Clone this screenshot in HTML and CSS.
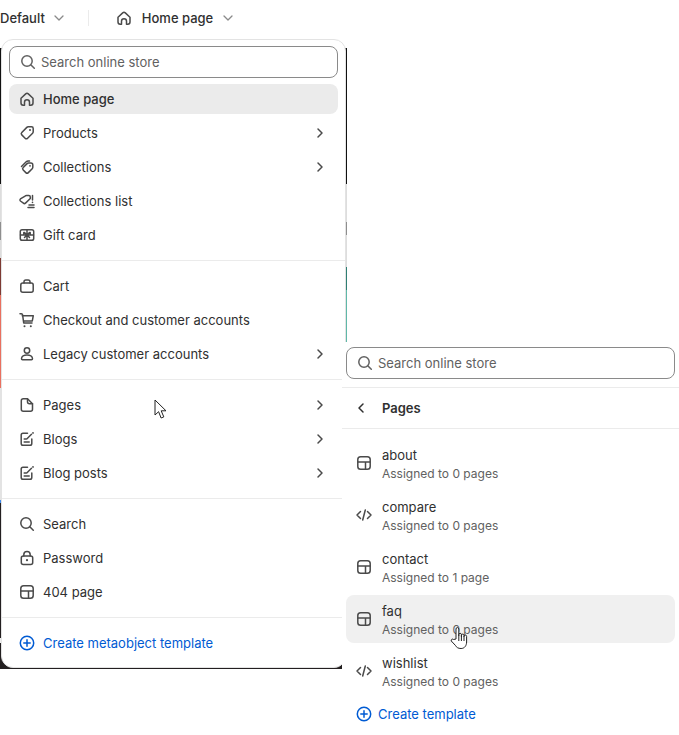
FILE: index.html
```html
<!DOCTYPE html>
<html>
<head>
	<meta charset="utf-8">
	<title>Home page</title>
	<link rel="stylesheet" href="styles.css">
</head>
<body>
	<!--icons-->
	<svg class="sprite" width="0" height="0">
		<symbol id="i-home" viewBox="0 0 20 20"><path d="M4 9.200 8.700 4.900a2 2 0 0 1 2.600 0L16 9.200v4.800a2.200 2.200 0 0 1-2.200 2.200h-1.300v-3a2.500 2.500 0 0 0-5 0v3H6.200A2.200 2.200 0 0 1 4 14z"/></symbol>
		<symbol id="i-tag" viewBox="0 0 20 20"><path d="M11.200 3.800h3.300a1.700 1.700 0 0 1 1.700 1.700v3.300a2 2 0 0 1-.6 1.400l-5 5a1.800 1.800 0 0 1-2.500 0l-3.300-3.300a1.800 1.800 0 0 1 0-2.500l5-5a2 2 0 0 1 1.400-.6z"/><circle class="fill" cx="13" cy="7" r="1"/></symbol>
		<symbol id="i-tags" viewBox="0 0 20 20"><path d="M11.500 6h2.400a1.900 1.900 0 0 1 1.900 1.900v2.400a2 2 0 0 1-.6 1.400l-3.900 3.900a1.800 1.800 0 0 1-2.500 0l-2.600-2.600a1.800 1.800 0 0 1 0-2.500l3.900-3.900a2 2 0 0 1 1.400-.6z"/><path d="M4.500 9.500l4.700-4.700a3 3 0 0 1 2-.9h1.300"/><circle class="fill" cx="13" cy="8.800" r=".9"/></symbol>
		<symbol id="i-list" viewBox="0 0 20 20"><path d="M9.500 4.500h2.300a1.500 1.500 0 0 1 1.500 1.500v1.500l-4.800 4.600a1.500 1.500 0 0 1-2.100 0L3.400 10a1.500 1.500 0 0 1 0-2.100l4.700-2.800a2 2 0 0 1 1.400-.6z"/><path d="M15.500 4.500v4.500M12 14h5M11 16.500h6"/><circle class="fill" cx="15.500" cy="11.400" r=".8"/></symbol>
		<symbol id="i-gift" viewBox="0 0 20 20"><rect x="3.300" y="4.800" width="13.400" height="10.400" rx="1.800"/><path d="M10 5v10M3.500 10h13M10 10 7.500 7.500H6.800v2.200zM10 10l2.500-2.500h.7v2.200zM10 10l-2.500 2.500M10 10l2.500 2.500"/></symbol>
		<symbol id="i-bag" viewBox="0 0 20 20"><rect x="3.800" y="7" width="12.400" height="9.200" rx="2"/><path d="M7 7V5.800A1.800 1.800 0 0 1 8.800 4h2.400A1.800 1.800 0 0 1 13 5.800V7"/></symbol>
		<symbol id="i-cart" viewBox="0 0 20 20"><path d="M3 3.800h1.300a1.300 1.300 0 0 1 1.300 1.100L6.700 13h8.300M5.200 5.700H16.300l-1 5.200H6.400"/><circle class="fill" cx="7.500" cy="16.300" r="1"/><circle class="fill" cx="13.800" cy="16.300" r="1"/></symbol>
		<symbol id="i-person" viewBox="0 0 20 20"><circle cx="10" cy="6.500" r="2.700"/><path d="M4.500 14.800c0-2.400 2.500-3.900 5.500-3.900s5.500 1.500 5.500 3.900a1 1 0 0 1-1 1h-9a1 1 0 0 1-1-1z"/></symbol>
		<symbol id="i-page" viewBox="0 0 20 20"><path d="M6.300 3.800h4.200l5 5v5.400a2 2 0 0 1-2 2H6.300a2 2 0 0 1-2-2V5.800a2 2 0 0 1 2-2z"/><path d="M10.500 4v2.800a2 2 0 0 0 2 2h3"/></symbol>
		<symbol id="i-blog" viewBox="0 0 20 20"><path d="M10.500 4.300H6a1.800 1.800 0 0 0-1.800 1.800v8.300A1.800 1.800 0 0 0 6 16.200h7a1.800 1.800 0 0 0 1.800-1.800V10M7.200 13h5M7.200 10h2.300M10 9.800l4.500-4.500"/><circle class="fill" cx="16" cy="3.900" r=".9"/></symbol>
		<symbol id="i-search" viewBox="0 0 20 20"><circle cx="9" cy="9" r="5.200"/><path d="m13 13 3.300 3.300"/></symbol>
		<symbol id="i-lock" viewBox="0 0 20 20"><rect x="4.300" y="8" width="11.400" height="8.500" rx="2"/><path d="M6.800 8V6.800a3.200 3.200 0 0 1 6.400 0V8"/><circle class="fill" cx="10" cy="12.200" r="1.100"/></symbol>
		<symbol id="i-layout" viewBox="0 0 20 20"><rect x="3.800" y="3.800" width="12.400" height="12.400" rx="2.800"/><path d="M4 9h12M11.500 9v7"/></symbol>
		<symbol id="i-code" viewBox="0 0 20 20"><path d="M6.500 6.500 3 10l3.500 3.500M13.500 6.500 17 10l-3.500 3.500M11.300 5 8.700 15"/></symbol>
		<symbol id="i-plus" viewBox="0 0 20 20"><circle cx="10" cy="10" r="6.700"/><path d="M10 6.800v6.400M6.800 10h6.400"/></symbol>
		<symbol id="i-down" viewBox="0 0 20 20"><path d="m6 8 4 4 4-4"/></symbol>
		<symbol id="i-right" viewBox="0 0 20 20"><path d="m8 6 4 4-4 4"/></symbol>
		<symbol id="i-left" viewBox="0 0 20 20"><path d="m12 6-4 4 4 4"/></symbol>
	</svg>

	<!--top bar-->
	<div class="topbar">
		<div class="picker">
			<span>Default</span>
			<svg class="icon caret"><use href="#i-down"/></svg>
		</div>
		<div class="bar-line"></div>
		<div class="picker picker-page">
			<svg class="icon"><use href="#i-home"/></svg>
			<span>Home page</span>
			<svg class="icon caret"><use href="#i-down"/></svg>
		</div>
	</div>

	<!--page behind the menus-->
	<div class="behind">
		<div class="strip strip-left"></div>
		<div class="strip strip-right"></div>
	</div>

	<!--first menu-->
	<div class="menu">
		<div class="search-wrap">
			<div class="search">
				<svg class="icon"><use href="#i-search"/></svg>
				<span>Search online store</span>
			</div>
		</div>
		<ul class="group group-first">
			<li class="row row-on"><svg class="icon"><use href="#i-home"/></svg><span class="label">Home page</span></li>
			<li class="row"><svg class="icon"><use href="#i-tag"/></svg><span class="label">Products</span><svg class="icon arrow"><use href="#i-right"/></svg></li>
			<li class="row"><svg class="icon"><use href="#i-tags"/></svg><span class="label">Collections</span><svg class="icon arrow"><use href="#i-right"/></svg></li>
			<li class="row"><svg class="icon"><use href="#i-list"/></svg><span class="label">Collections list</span></li>
			<li class="row"><svg class="icon"><use href="#i-gift"/></svg><span class="label">Gift card</span></li>
		</ul>
		<ul class="group">
			<li class="row"><svg class="icon"><use href="#i-bag"/></svg><span class="label">Cart</span></li>
			<li class="row"><svg class="icon"><use href="#i-cart"/></svg><span class="label">Checkout and customer accounts</span></li>
			<li class="row"><svg class="icon"><use href="#i-person"/></svg><span class="label">Legacy customer accounts</span><svg class="icon arrow"><use href="#i-right"/></svg></li>
		</ul>
		<ul class="group">
			<li class="row"><svg class="icon"><use href="#i-page"/></svg><span class="label">Pages</span><svg class="icon arrow"><use href="#i-right"/></svg></li>
			<li class="row"><svg class="icon"><use href="#i-blog"/></svg><span class="label">Blogs</span><svg class="icon arrow"><use href="#i-right"/></svg></li>
			<li class="row"><svg class="icon"><use href="#i-blog"/></svg><span class="label">Blog posts</span><svg class="icon arrow"><use href="#i-right"/></svg></li>
		</ul>
		<ul class="group">
			<li class="row"><svg class="icon"><use href="#i-search"/></svg><span class="label">Search</span></li>
			<li class="row"><svg class="icon"><use href="#i-lock"/></svg><span class="label">Password</span></li>
			<li class="row"><svg class="icon"><use href="#i-layout"/></svg><span class="label">404 page</span></li>
		</ul>
		<div class="group group-create">
			<div class="row row-create"><svg class="icon"><use href="#i-plus"/></svg><span class="label">Create metaobject template</span></div>
		</div>
	</div>

	<!--second menu-->
	<div class="submenu">
		<div class="search-wrap sub-search">
			<div class="search">
				<svg class="icon"><use href="#i-search"/></svg>
				<span>Search online store</span>
			</div>
		</div>
		<div class="sub-head">
			<svg class="icon"><use href="#i-left"/></svg>
			<span>Pages</span>
		</div>
		<ul class="sub-list">
			<li class="sub-row"><svg class="icon"><use href="#i-layout"/></svg><div class="sub-text"><div class="sub-name">about</div><div class="sub-note">Assigned to 0 pages</div></div></li>
			<li class="sub-row"><svg class="icon"><use href="#i-code"/></svg><div class="sub-text"><div class="sub-name">compare</div><div class="sub-note">Assigned to 0 pages</div></div></li>
			<li class="sub-row"><svg class="icon"><use href="#i-layout"/></svg><div class="sub-text"><div class="sub-name">contact</div><div class="sub-note">Assigned to 1 page</div></div></li>
			<li class="sub-row sub-row-on"><svg class="icon"><use href="#i-layout"/></svg><div class="sub-text"><div class="sub-name">faq</div><div class="sub-note">Assigned to 0 pages</div></div></li>
			<li class="sub-row"><svg class="icon"><use href="#i-code"/></svg><div class="sub-text"><div class="sub-name">wishlist</div><div class="sub-note">Assigned to 0 pages</div></div></li>
		</ul>
		<div class="sub-create">
			<svg class="icon"><use href="#i-plus"/></svg>
			<span>Create template</span>
		</div>
	</div>

	<!--mouse pointers-->
	<svg class="pointer pointer-arrow" width="14" height="21" viewBox="0 0 14 21"><path d="M1 1v15l3.600-3.300 2.500 6.300 2.700-1.100-2.600-6.100h4.800z"/></svg>
	<svg class="pointer pointer-hand" width="18" height="24" viewBox="0 0 18 24"><path d="M6 13V3a1.400 1.400 0 0 1 2.800 0v7-1.400a1.300 1.300 0 0 1 2.600 0V11 9.400a1.300 1.300 0 0 1 2.600 0V11v-.6a1.300 1.300 0 0 1 2.600 0V16c0 3.500-2 6.500-5.500 6.500-3 0-4.500-1-5.800-3.200L1.300 15a1.400 1.400 0 0 1 2.300-1.500z"/><path d="M8.800 10v5M11.400 11v4M14 11v4"/></svg>
</body>
</html>
```

FILE: styles.css
```css
*{
    margin: 0;
    padding: 0;
    box-sizing: border-box;
    list-style: none;
}

html, body{
    width: 100%;
    height: 100%;
    overflow: hidden;
    background-color: #fff;
}

body{
    position: relative;
    font-family: Inter, "Liberation Sans", sans-serif;
    font-size: 13px;
    color: #303030;
}

.sprite{
    position: absolute;
}

.icon{
    width: 20px;
    height: 20px;
    flex: none;
    fill: none;
    stroke: #4a4a4a;
    stroke-width: 1.5;
    stroke-linecap: round;
    stroke-linejoin: round;
}

symbol .fill{
    fill: #4a4a4a;
    stroke: none;
}

/*top bar*/
.topbar{
    display: flex;
    align-items: center;
    height: 35px;
    font-weight: 500;
}

.picker{
    display: flex;
    align-items: center;
    gap: 4px;
}

.picker .caret{
    stroke: #8a8a8a;
    stroke-width: 1.3;
}

.picker-page{
    gap: 8px;
}

.picker-page .caret{
    margin-left: -3px;
}

.bar-line{
    width: 1px;
    height: 16px;
    margin: 0 25px 0 19px;
    background-color: #ebebeb;
}

/*what shows around the menus*/
.behind{
    position: absolute;
    left: 0;
    top: 48px;
    width: 347px;
    height: 621px;
    background-color: #231f20;
}

.strip{
    position: absolute;
    top: 0;
    width: 2px;
    height: 621px;
}

.strip-left{
    left: 0;
    background: linear-gradient(#111 0 136px, #ddd 136px 174px, #8e8e8e 174px 192px, #ddd 192px 210px, #7d3a33 210px 247px, #e9705f 247px 340px, #e3e3e3 340px 452px, #3f8cf0 452px 455px, #231f20 455px 590px, #eee 590px 595px, #231f20 595px);
}

.strip-right{
    right: 0;
    background: linear-gradient(#111 0 136px, #ddd 136px 174px, #8e8e8e 174px 187px, #ddd 187px 219px, #2f7f73 219px 242px, #5fb8a8 242px 294px, #fff 294px);
}

/*first menu*/
.menu{
    position: absolute;
    left: 1px;
    top: 39px;
    width: 345px;
    height: 629px;
    padding-top: 6px;
    background-color: #fff;
    border: 1px solid #e3e3e3;
    border-radius: 12px;
}

.search-wrap{
    padding: 0 7px;
}

.search{
    display: flex;
    align-items: center;
    gap: 3px;
    height: 32px;
    padding: 0 8px;
    color: #616161;
    border: 1px solid #8a8a8a;
    border-radius: 8px;
}

.search .icon{
    stroke: #616161;
}

.group{
    display: flex;
    flex-direction: column;
    gap: 4px;
    padding: 10px 7px;
    border-top: 1px solid #ebebeb;
}

.group-first{
    padding-top: 6px;
    border-top: 0;
}

.row{
    display: flex;
    align-items: center;
    gap: 6px;
    height: 30px;
    padding: 0 8px;
    border-radius: 8px;
}

.row .label{
    flex: 1;
}

.row-on{
    font-weight: 500;
    background-color: #ebebeb;
}

.row-create{
    color: #005bd3;
}

.row-create .icon, .sub-create .icon{
    stroke: #005bd3;
}

/*second menu*/
.submenu{
    position: absolute;
    left: 342px;
    top: 342px;
    width: 337px;
    height: 393px;
    padding-top: 5px;
    background-color: #fff;
}

.sub-search{
    padding: 0 4px;
}

.sub-head{
    display: flex;
    align-items: center;
    gap: 11px;
    height: 42px;
    margin-top: 8px;
    padding: 0 9px;
    font-weight: 600;
    border-top: 1px solid #ebebeb;
    border-bottom: 1px solid #ebebeb;
}

.sub-head .icon{
    stroke: #303030;
}

.sub-list{
    display: flex;
    flex-direction: column;
    gap: 4px;
    padding: 10px 4px 0;
}

.sub-row{
    display: flex;
    align-items: center;
    gap: 8px;
    height: 48px;
    padding: 0 8px;
    border-radius: 8px;
}

.sub-row-on{
    background-color: #f0f0f0;
}

.sub-text{
    padding-top: 2px;
}

.sub-name{
    line-height: 18px;
}

.sub-note{
    margin-top: 1px;
    font-size: 12px;
    line-height: 18px;
    color: #616161;
}

.sub-create{
    display: flex;
    align-items: center;
    gap: 4px;
    height: 20px;
    margin-top: 9px;
    padding: 0 12px;
    color: #005bd3;
}

/*pointers over everything*/
.pointer{
    position: absolute;
    fill: #fff;
    stroke: #222;
    stroke-width: 1;
    stroke-linejoin: round;
}

.pointer-arrow{
    left: 154px;
    top: 399px;
}

.pointer-hand{
    left: 450px;
    top: 626px;
}
```
